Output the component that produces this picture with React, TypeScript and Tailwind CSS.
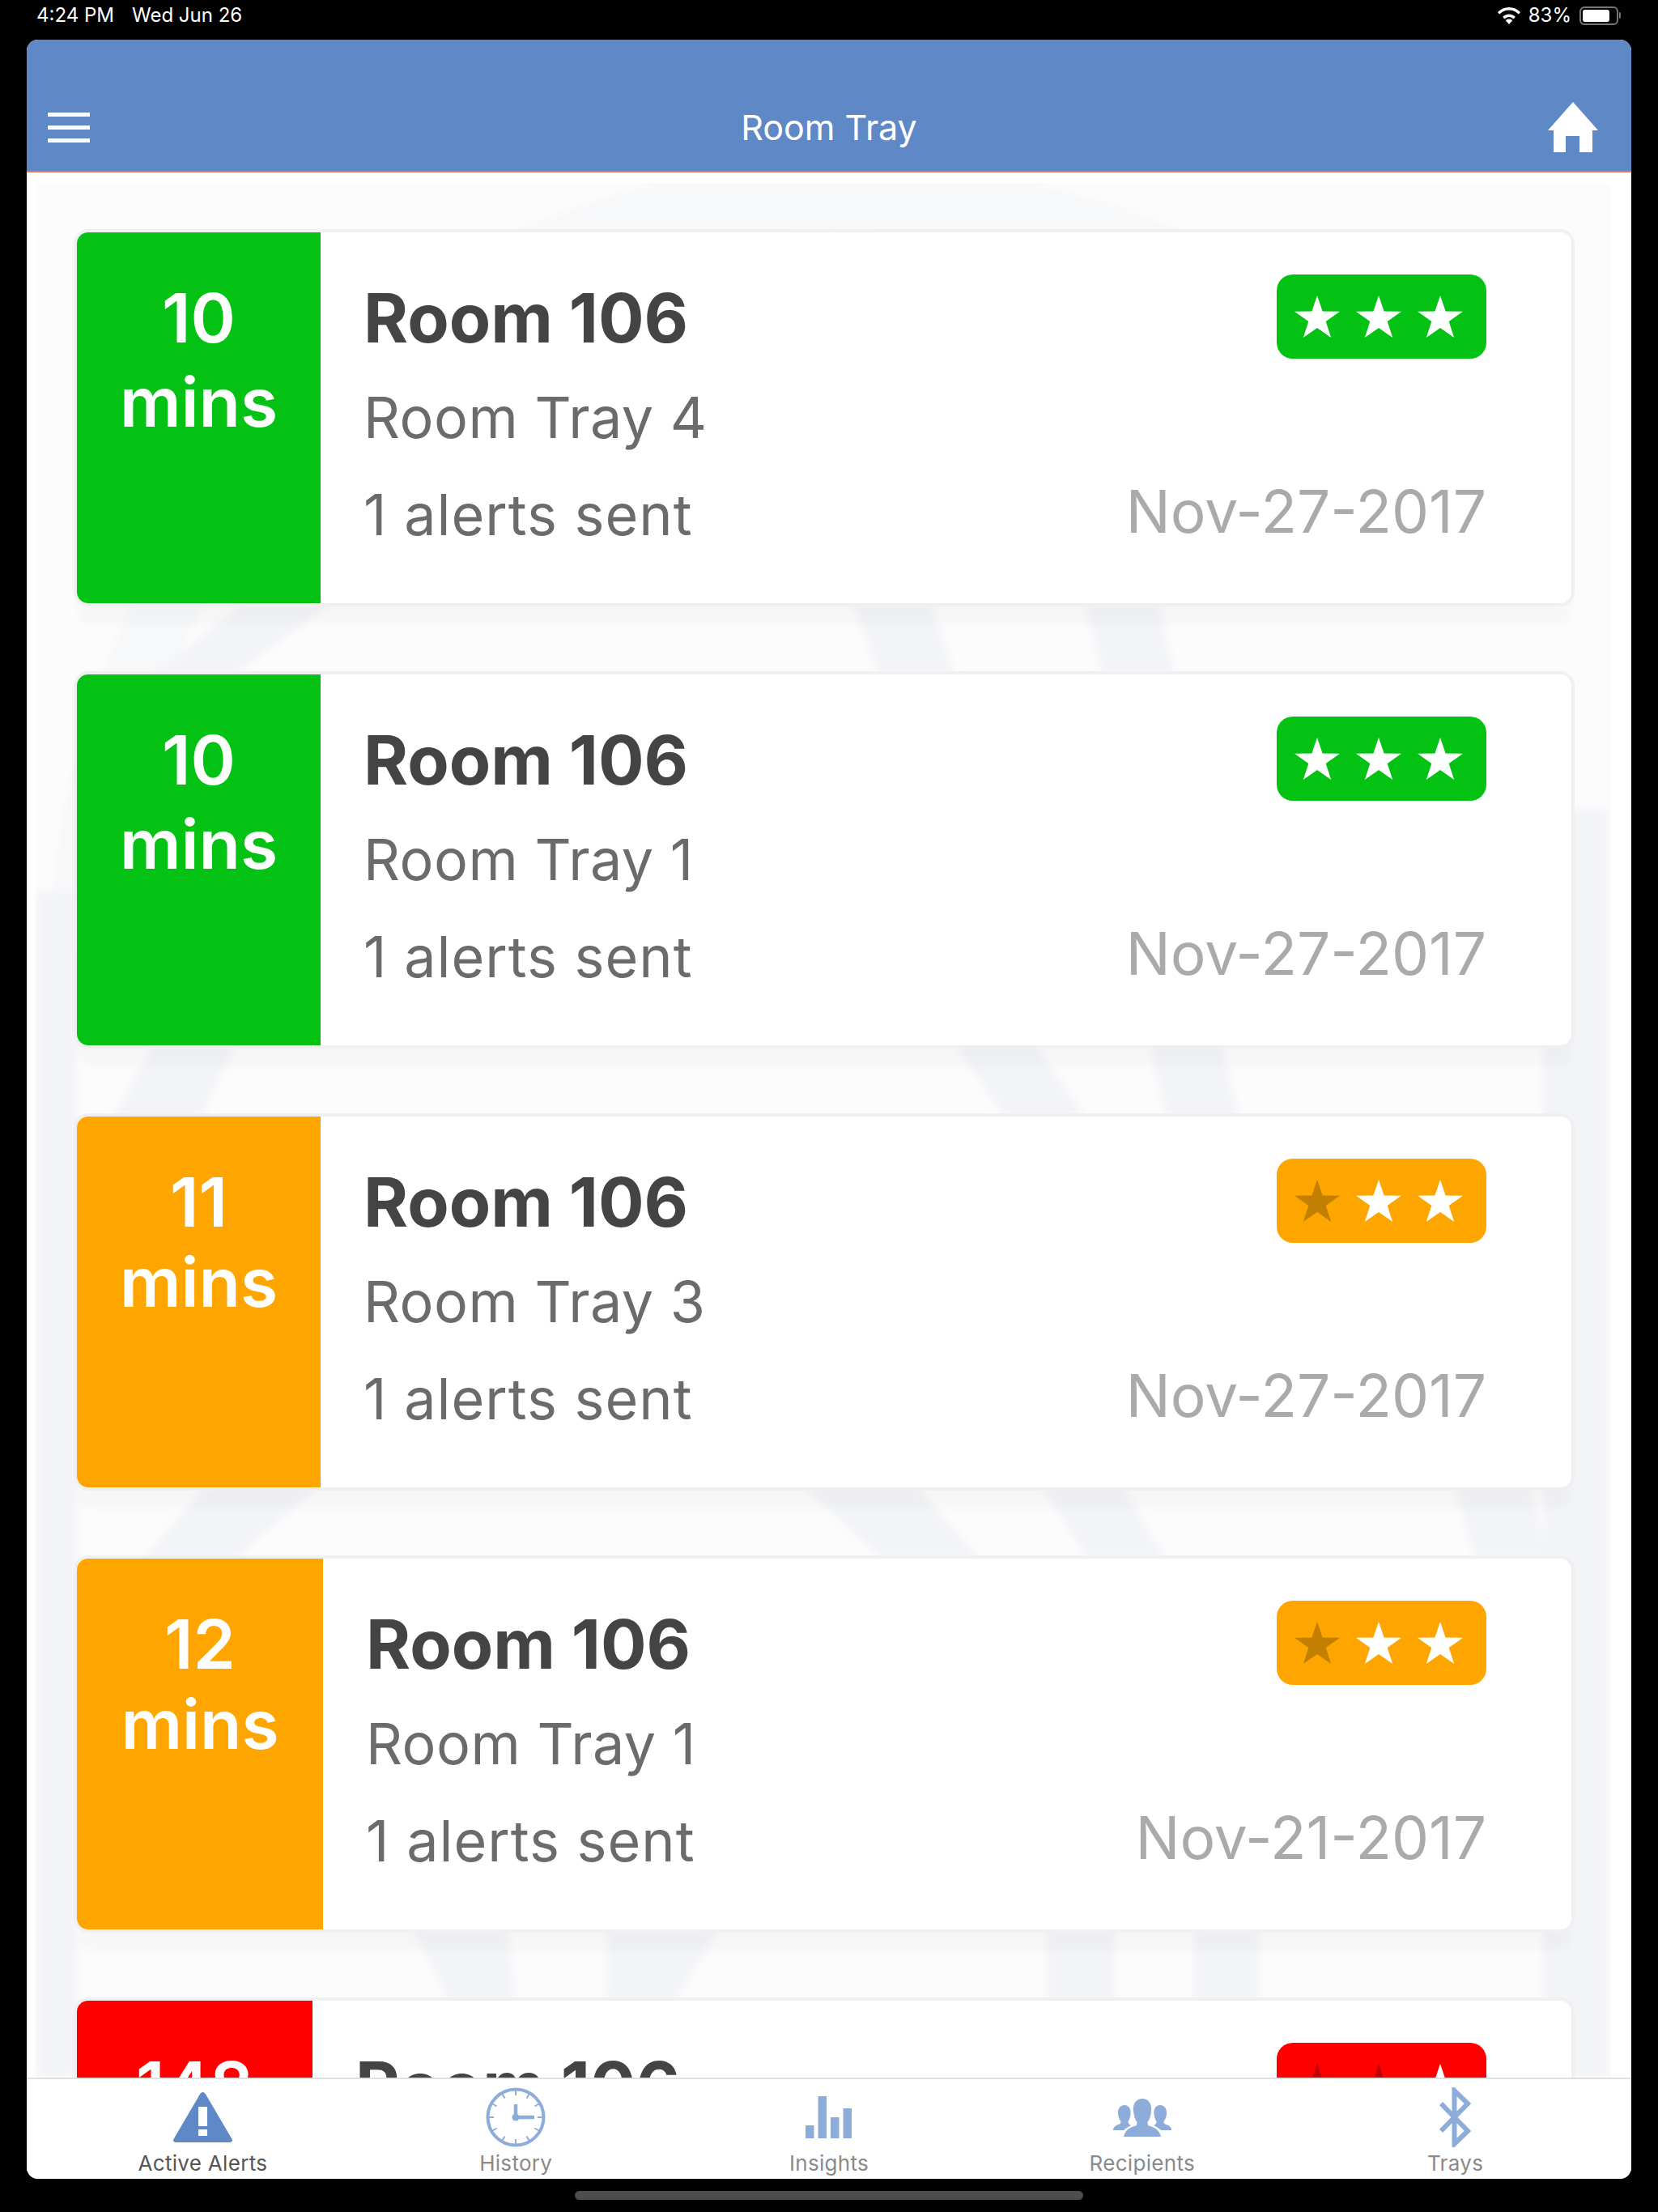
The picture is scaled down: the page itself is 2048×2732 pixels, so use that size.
const BLUE = "#8eacda";

type CardProps = {
  time: string;
  tray: string;
  date: string;
  colorClass: string;
  widthClass: string;
  dim: number;
  dimClass: string;
  tight?: boolean;
};

const cards: CardProps[] = [
  { time: "10", tray: "Room Tray 4", date: "Nov-27-2017", colorClass: "bg-[#03c213]", widthClass: "w-[301px]", dim: 0, dimClass: "" },
  { time: "10", tray: "Room Tray 1", date: "Nov-27-2017", colorClass: "bg-[#03c213]", widthClass: "w-[301px]", dim: 0, dimClass: "" },
  { time: "11", tray: "Room Tray 3", date: "Nov-27-2017", colorClass: "bg-[#ffa500]", widthClass: "w-[301px]", dim: 1, dimClass: "text-[#c27f00]", tight: true },
  { time: "12", tray: "Room Tray 1", date: "Nov-21-2017", colorClass: "bg-[#ffa500]", widthClass: "w-[304px]", dim: 1, dimClass: "text-[#c27f00]", tight: true },
  { time: "148", tray: "Room Tray 2", date: "Nov-21-2017", colorClass: "bg-[#ff0000]", widthClass: "w-[291px]", dim: 2, dimClass: "text-[#c00000]", tight: true },
];

function Star({ className }: { className: string }) {
  return (
    <svg viewBox="0 0 56 52" className={`w-[56px] h-[52px] ${className}`}>
      <path fill="currentColor" d="M28 0 L34.6 19.6 L56 19.8 L38.7 32 L45.2 52 L28 40 L10.8 52 L17.3 32 L0 19.8 L21.4 19.6 Z" />
    </svg>
  );
}

function AlertCard({ time, tray, date, colorClass, widthClass, dim, dimClass, tight }: CardProps) {
  return (
    <div className="relative flex h-[458px] w-[1846px] shrink-0 overflow-hidden rounded-[14px] bg-white">
      <div className={`${widthClass} ${colorClass} shrink-0 text-center font-semibold text-[84px] text-white ${tight ? "pt-[56px] leading-[99px]" : "pt-[54px] leading-[104px]"}`}>
        <div>{time}</div>
        <div>mins</div>
      </div>
      <div className="flex flex-1 justify-between pl-[53px] pr-[105px]">
        <div className="flex flex-col pt-[58px]">
          <div className="text-[84px] leading-[96px] font-bold text-[#444444]">Room 106</div>
          <div className="mt-[34px] text-[70px] leading-[82px] tracking-[0.5px] text-[#6b6b6b]">{tray}</div>
          <div className="mt-[38px] text-[70px] leading-[82px] tracking-[1px] text-[#6b6b6b]">1 alerts sent</div>
        </div>
        <div className="flex flex-col items-end pt-[52px]">
          <div className={`flex h-[104px] w-[259px] items-center gap-[20px] rounded-[20px] pl-[22px] ${colorClass}`}>
            {[0, 1, 2].map((i) => (
              <Star key={i} className={i < dim ? dimClass : "text-white"} />
            ))}
          </div>
          <div className="mt-[148px] text-[73px] leading-[82px] text-[#aaaaaa]">{date}</div>
        </div>
      </div>
    </div>
  );
}

function Watermark() {
  return (
    <svg viewBox="43 226 1947 2340" className="absolute left-0 top-0 h-[2340px] w-[1947px] blur-[4px]">
      <g fill="#f3f4f8">
        <path fillOpacity="0.55" d="M64 1180 C64 640 500 210 1024 200 C1300 200 1600 300 1780 520 L1720 570 C1560 370 1300 285 1024 285 C540 285 150 670 140 1180 Z" />
        <path d="M46 1100 H95 V2566 H46 Z" />
        <path d="M1906 2566 V1000 H1987 V2566 Z" />
        <path d="M300 745 H410 L290 833 H190 Z" />
        <path d="M1053 745 H1150 L1179 833 H1086 Z" />
        <path d="M1341 745 H1431 L1451 833 H1361 Z" />
        <path d="M190 1291 H290 L250 1379 H140 Z" />
        <path d="M1180 1291 H1280 L1340 1379 H1240 Z" />
        <path d="M1420 1291 H1510 L1530 1379 H1440 Z" />
        <path d="M253 1837 H393 L291 1925 H177 Z" />
        <path d="M993 1837 H1133 L1210 1925 H1089 Z" />
        <path d="M1286 1837 H1388 L1439 1925 H1344 Z" />
        <path d="M1796 1837 H1892 L1911 1925 H1822 Z" />
        <path d="M509 2383 H627 L637 2472 H555 Z" />
        <path d="M888 2383 H750 L748 2472 H833 Z" />
        <path d="M1292 2383 H1377 V2472 H1292 Z" />
        <path d="M1475 2383 H1556 V2472 H1475 Z" />
      </g>
    </svg>
  );
}

function AlertIcon() {
  return (
    <svg viewBox="0 0 73 62" className="h-[62px] w-[73px]">
      <path fill="#5f88c6" d="M36.5 0 C38 0 39 1 40 2.5 L72 57 C74 60 72.5 62 70 62 H3 C0.5 62 -1 60 1 57 L33 2.5 C34 1 35 0 36.5 0 Z" />
      <rect x="31" y="18" width="11" height="24" fill="#fff" />
      <rect x="31" y="46" width="11" height="8" fill="#fff" />
    </svg>
  );
}

function ClockIcon() {
  const ticks = Array.from({ length: 12 }, (_, i) => (i * Math.PI) / 6);
  return (
    <svg viewBox="0 0 74 74" className="h-[74px] w-[74px]">
      <circle cx="37" cy="37" r="34.5" fill="none" stroke={BLUE} strokeWidth="4" />
      {ticks.map((a, i) => (
        <line
          key={i}
          x1={37 + Math.sin(a) * 33}
          y1={37 - Math.cos(a) * 33}
          x2={37 + Math.sin(a) * 27}
          y2={37 - Math.cos(a) * 27}
          stroke={BLUE}
          strokeWidth="2"
        />
      ))}
      <path d="M37 21 V37 H60" fill="none" stroke={BLUE} strokeWidth="4.5" />
      <circle cx="37" cy="37" r="4.5" fill={BLUE} />
    </svg>
  );
}

function InsightsIcon() {
  return (
    <svg viewBox="0 0 57 52" className="h-[52px] w-[57px]" fill={BLUE}>
      <rect x="0" y="36" width="10.5" height="16" />
      <rect x="15.5" y="0" width="10.5" height="52" />
      <rect x="31" y="26" width="10.5" height="26" />
      <rect x="46.5" y="15" width="10.5" height="37" />
    </svg>
  );
}

function RecipientsIcon() {
  return (
    <svg viewBox="0 0 72 47" className="h-[47px] w-[72px]" fill={BLUE}>
      <path d="M14 8 C20 8 22 13 21.5 19 C21.2 23 20 26 18.5 28 L19 31 L22 33 C18 35 15 37 13 39 H0 C0 35 3 33 9 31 L9.5 28 C7.5 26 6.5 23 6 19 C5.5 13 8 8 14 8 Z" />
      <path d="M58 8 C52 8 50 13 50.5 19 C50.8 23 52 26 53.5 28 L53 31 L50 33 C54 35 57 37 59 39 H72 C72 35 69 33 63 31 L62.5 28 C64.5 26 65.5 23 66 19 C66.5 13 64 8 58 8 Z" />
      <path d="M36 0 C44 0 48 7 47 15 C46.5 21 45 26 42.5 29 L43 33 C51 35.5 57 38 59 47 H13 C15 38 21 35.5 29 33 L29.5 29 C27 26 25.5 21 25 15 C24 7 28 0 36 0 Z" />
    </svg>
  );
}

function BluetoothIcon() {
  return (
    <svg viewBox="0 0 41 74" className="h-[74px] w-[41px]">
      <path d="M3 20 L36 54 L19.5 70 V4 L36 20 L3 54" fill="none" stroke={BLUE} strokeWidth="6" />
    </svg>
  );
}

const tabs = [
  { label: "Active Alerts", icon: <AlertIcon />, active: true, box: "pt-[16px]" },
  { label: "History", icon: <ClockIcon />, active: false, box: "pt-[10px]" },
  { label: "Insights", icon: <InsightsIcon />, active: false, box: "pt-[21px]" },
  { label: "Recipients", icon: <RecipientsIcon />, active: false, box: "pt-[24px]" },
  { label: "Trays", icon: <BluetoothIcon />, active: false, box: "pt-[10px]" },
];

export default function App() {
  return (
    <div className="flex h-[2732px] w-[2048px] flex-col overflow-hidden bg-black font-['Inter',sans-serif]">
      <div className="flex h-[49px] shrink-0 items-start justify-between pl-[45px] pr-[46px] pt-[7px] text-[24px] leading-none text-white">
        <div className="flex gap-[22px]">
          <span>4:24 PM</span>
          <span>Wed Jun 26</span>
        </div>
        <div className="flex items-center gap-[10px]">
          <svg viewBox="0 0 28 22" className="h-[22px] w-[28px]" fill="#fff">
            <path d="M14 22 L9.8 17.2 C12 15 16 15 18.2 17.2 Z" />
            <path d="M14 9.5 C17.2 9.5 19.8 10.8 21.8 12.8 L19.6 15.4 C18.1 13.9 16.2 13 14 13 C11.8 13 9.9 13.9 8.4 15.4 L6.2 12.8 C8.2 10.8 10.8 9.5 14 9.5 Z" />
            <path d="M14 1 C19.4 1 24.2 3.2 28 7 L25.8 9.6 C22.6 6.5 18.6 4.6 14 4.6 C9.4 4.6 5.4 6.5 2.2 9.6 L0 7 C3.8 3.2 8.6 1 14 1 Z" />
          </svg>
          <span>83%</span>
          <div className="flex items-center">
            <div className="flex h-[23px] w-[48px] items-center rounded-[6px] border-2 border-[#777777] p-[2px]">
              <div className="h-full w-[33px] rounded-[3px] bg-white" />
            </div>
            <div className="ml-[1px] h-[8px] w-[2px] rounded-r-full bg-[#777777]" />
          </div>
        </div>
      </div>

      <div className="mx-[33px] flex h-[2642px] shrink-0 flex-col overflow-hidden rounded-[14px] bg-white">
        <header className="flex h-[164px] shrink-0 items-center justify-between border-b-2 border-[#e8795a] bg-[#5f88c6] pl-[26px] pr-[41px] pt-[54px]">
          <div className="flex w-[115px] flex-col gap-[11px]">
            <div className="h-[5px] w-[52px] bg-white" />
            <div className="h-[5px] w-[52px] bg-white" />
            <div className="h-[5px] w-[52px] bg-white" />
          </div>
          <div className="text-[43px] leading-none text-white">Room Tray</div>
          <div className="flex w-[100px] justify-end">
            <svg viewBox="0 0 62 62" className="h-[62px] w-[62px]" fill="#fff">
              <path d="M31 0 L62 35 H55 V62 H39 V42 H22 V62 H7 V35 H0 Z" />
            </svg>
          </div>
        </header>

        <main className="min-h-0 flex-1 overflow-hidden bg-white pl-[10px] pr-[25px] pt-[13px]">
          <div className="relative h-[2353px] overflow-hidden bg-[#fcfcfc]">
            <Watermark />
            <div className="relative flex flex-col gap-[88px] pl-[52px] pt-[61px]">
              {cards.map((c, i) => (
                <div key={i} className="w-[1846px] rounded-[14px] shadow-[0_0_0_4px_#f0f0f0,0_28px_12px_-2px_rgba(0,0,0,0.025)]">
                  <AlertCard {...c} />
                </div>
              ))}
            </div>
          </div>
        </main>

        <nav className="relative grid h-[125px] shrink-0 grid-cols-5 border-t-2 border-[#e0e0e0] bg-white px-[24px]">
          {tabs.map((t) => (
            <div key={t.label} className="relative flex flex-col items-center">
              <div className={`flex h-[89px] items-start ${t.box}`}>{t.icon}</div>
              <div className={`text-[26px] leading-[30px] tracking-[0.3px] ${t.active ? "text-[#555555]" : "text-[#8a8a8a]"}`}>{t.label}</div>
            </div>
          ))}
        </nav>
      </div>

      <div className="flex h-[41px] shrink-0 justify-center pt-[15px]">
        <div className="h-[11px] w-[628px] rounded-full bg-[#4d4d4d]" />
      </div>
    </div>
  );
}
